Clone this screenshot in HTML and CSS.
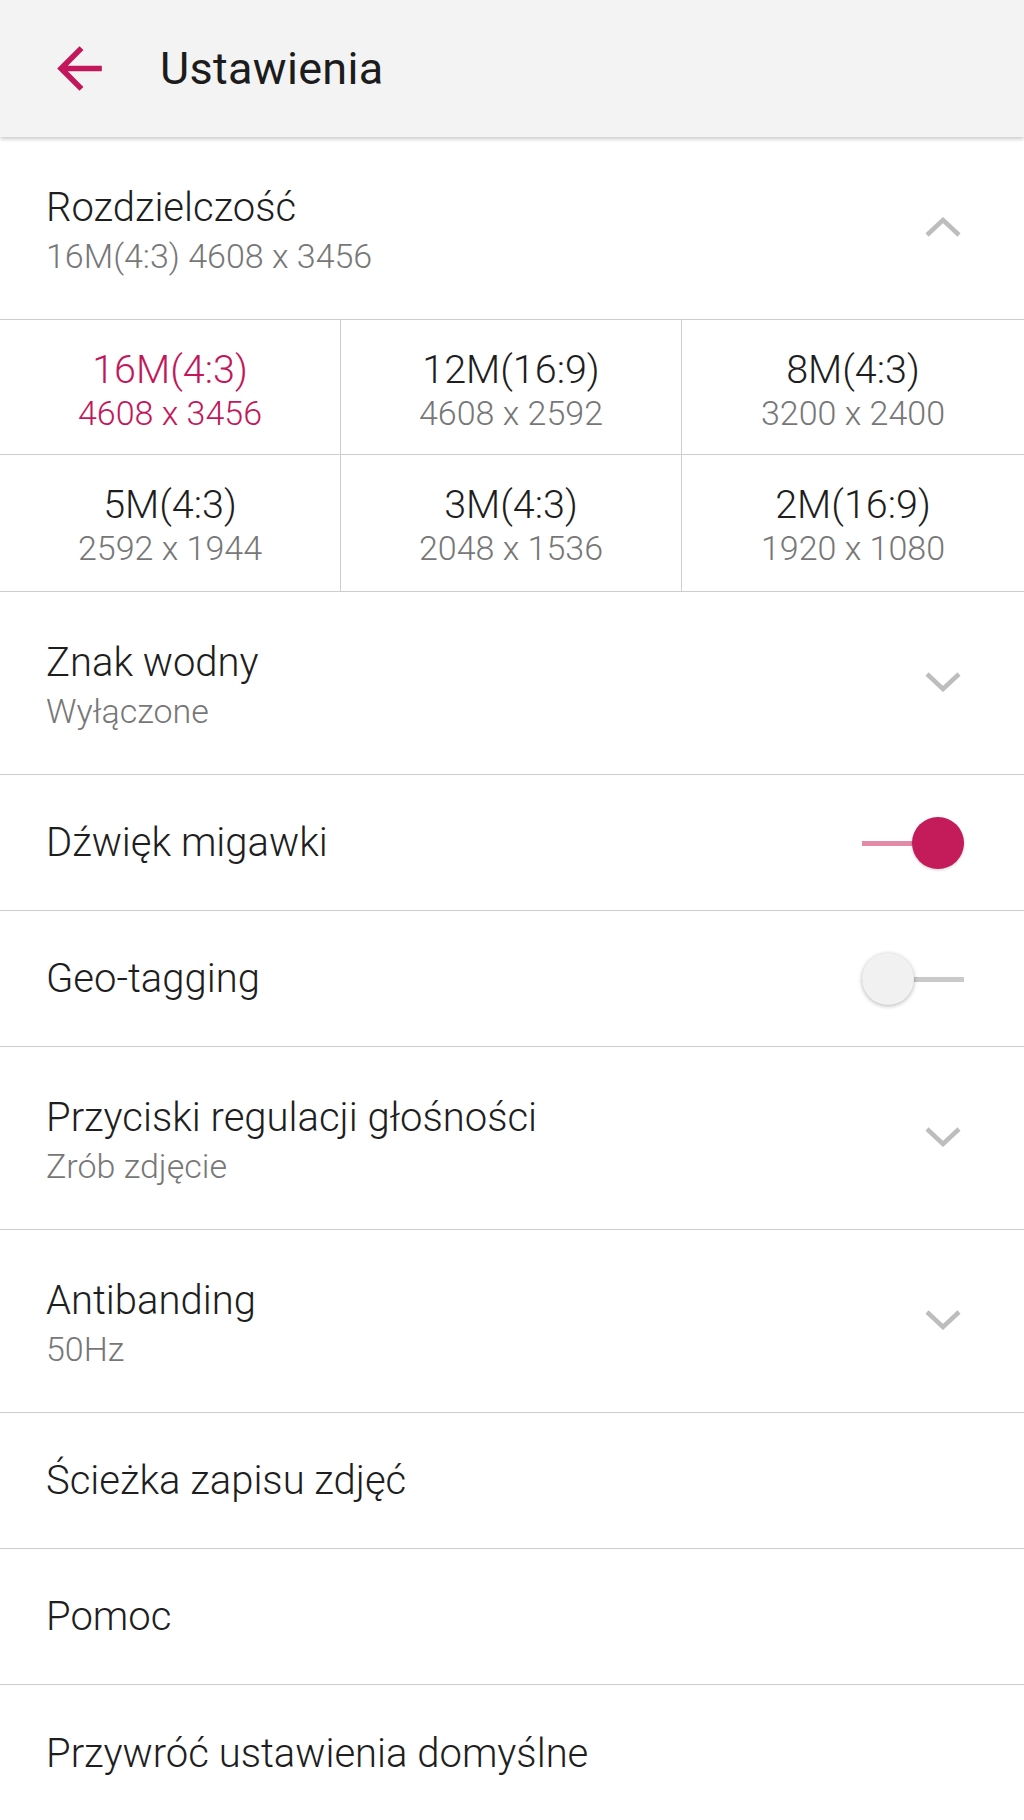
FILE: index.html
```html
<!DOCTYPE html>
<html lang="pl">
<head>
<meta charset="utf-8">
<title>Ustawienia</title>
<link rel="stylesheet" href="styles.css">
</head>
<body>
<header class="toolbar">
  <svg class="back" viewBox="0 0 24 24" aria-hidden="true"><path d="M20 11H7.83l5.59-5.59L12 4l-8 8 8 8 1.41-1.41L7.83 13H20v-2z"/></svg>
  <h1 class="toolbar-title">Ustawienia</h1>
</header>
<main class="list">
  <div class="row row-two">
    <div class="texts">
      <div class="title">Rozdzielczość</div>
      <div class="sub">16M(4:3) 4608 x 3456</div>
    </div>
    <svg class="chev" viewBox="0 0 36 20"><path d="M2 18 L18 3 L34 18"/></svg>
  </div>
  <div class="grid">
    <div class="cell active"><div class="big">16M(4:3)</div><div class="small">4608 x 3456</div></div>
    <div class="cell"><div class="big">12M(16:9)</div><div class="small">4608 x 2592</div></div>
    <div class="cell"><div class="big">8M(4:3)</div><div class="small">3200 x 2400</div></div>
    <div class="cell"><div class="big">5M(4:3)</div><div class="small">2592 x 1944</div></div>
    <div class="cell"><div class="big">3M(4:3)</div><div class="small">2048 x 1536</div></div>
    <div class="cell"><div class="big">2M(16:9)</div><div class="small">1920 x 1080</div></div>
  </div>
  <div class="row row-two">
    <div class="texts">
      <div class="title">Znak wodny</div>
      <div class="sub">Wyłączone</div>
    </div>
    <svg class="chev" viewBox="0 0 36 20"><path d="M2 2 L18 17 L34 2"/></svg>
  </div>
  <div class="row row-one">
    <div class="title">Dźwięk migawki</div>
    <div class="switch on"><span class="track"></span><span class="thumb"></span></div>
  </div>
  <div class="row row-one">
    <div class="title">Geo-tagging</div>
    <div class="switch off"><span class="track"></span><span class="thumb"></span></div>
  </div>
  <div class="row row-two">
    <div class="texts">
      <div class="title">Przyciski regulacji głośności</div>
      <div class="sub">Zrób zdjęcie</div>
    </div>
    <svg class="chev" viewBox="0 0 36 20"><path d="M2 2 L18 17 L34 2"/></svg>
  </div>
  <div class="row row-two">
    <div class="texts">
      <div class="title">Antibanding</div>
      <div class="sub">50Hz</div>
    </div>
    <svg class="chev" viewBox="0 0 36 20"><path d="M2 2 L18 17 L34 2"/></svg>
  </div>
  <div class="row row-one"><div class="title">Ścieżka zapisu zdjęć</div></div>
  <div class="row row-one"><div class="title">Pomoc</div></div>
  <div class="row row-one last"><div class="title">Przywróć ustawienia domyślne</div></div>
</main>
</body>
</html>
```
FILE: styles.css
```css
html, body {
  margin: 0;
  padding: 0;
  background: #ffffff;
}
body {
  font-family: Roboto, "Noto Sans", sans-serif;
  color: #212121;
  width: 1024px;
  overflow: hidden;
}
.toolbar {
  position: relative;
  z-index: 2;
  height: 137px;
  background: #f3f3f3;
  display: flex;
  align-items: center;
  box-shadow: 0 2px 4px rgba(0, 0, 0, 0.22);
}
.back {
  width: 67px;
  height: 67px;
  margin-left: 46px;
  fill: #c2185b;
  flex: none;
}
.toolbar-title {
  margin: 0 0 0 47px;
  font-size: 45px;
  font-weight: 400;
  color: #1c1c1c;
  letter-spacing: 0.3px;
}
.list {
  display: flex;
  flex-direction: column;
}
.row {
  display: flex;
  align-items: center;
  justify-content: space-between;
  padding: 0 46px;
  border-bottom: 1px solid #cdcdcd;
  box-sizing: border-box;
}
.row.last { border-bottom: none; }
.row-two {
  height: 183px;
  align-items: flex-start;
  padding-top: 46px;
}
.row-one {
  height: 136px;
}
.title {
  font-size: 40px;
  font-weight: 300;
  line-height: 49px;
  color: #1e1e1e;
}
.sub {
  font-size: 34px;
  font-weight: 300;
  line-height: 49px;
  color: #777777;
}
.chev {
  width: 36px;
  height: 20px;
  margin-top: 34px;
  margin-right: 17px;
  fill: none;
  stroke: #bdbdbd;
  stroke-width: 4.5;
}
.grid {
  display: grid;
  grid-template-columns: 341px 341px 342px;
  border-bottom: 1px solid #cdcdcd;
}
.cell {
  height: 136px;
  box-sizing: border-box;
  padding-top: 28px;
  text-align: center;
  border-right: 1px solid #cdcdcd;
}
.cell:nth-child(3n) { border-right: none; }
.cell:nth-child(-n+3) { border-bottom: 1px solid #cdcdcd; height: 135px; }
.big {
  font-size: 39.5px;
  font-weight: 300;
  line-height: 43px;
  color: #1e1e1e;
}
.small {
  font-size: 34px;
  font-weight: 300;
  line-height: 44px;
  color: #777777;
}
.cell.active .big,
.cell.active .small {
  color: #c2185b;
}
.switch {
  position: relative;
  width: 102px;
  height: 52px;
  margin-right: 14px;
}
.track {
  position: absolute;
  left: 0;
  right: 0;
  top: 24px;
  height: 5px;
}
.thumb {
  position: absolute;
  top: 0;
  width: 52px;
  height: 52px;
  border-radius: 50%;
}
.switch.on .track { background: #e38aa9; }
.switch.on .thumb {
  right: 0;
  background: #c41c5a;
  box-shadow: 0 1px 3px rgba(0, 0, 0, 0.2);
}
.switch.off .track { background: #c9c9c9; }
.switch.off .thumb {
  left: 0;
  background: #f1f1f1;
  box-shadow: 0 1px 4px rgba(0, 0, 0, 0.3);
}
```
